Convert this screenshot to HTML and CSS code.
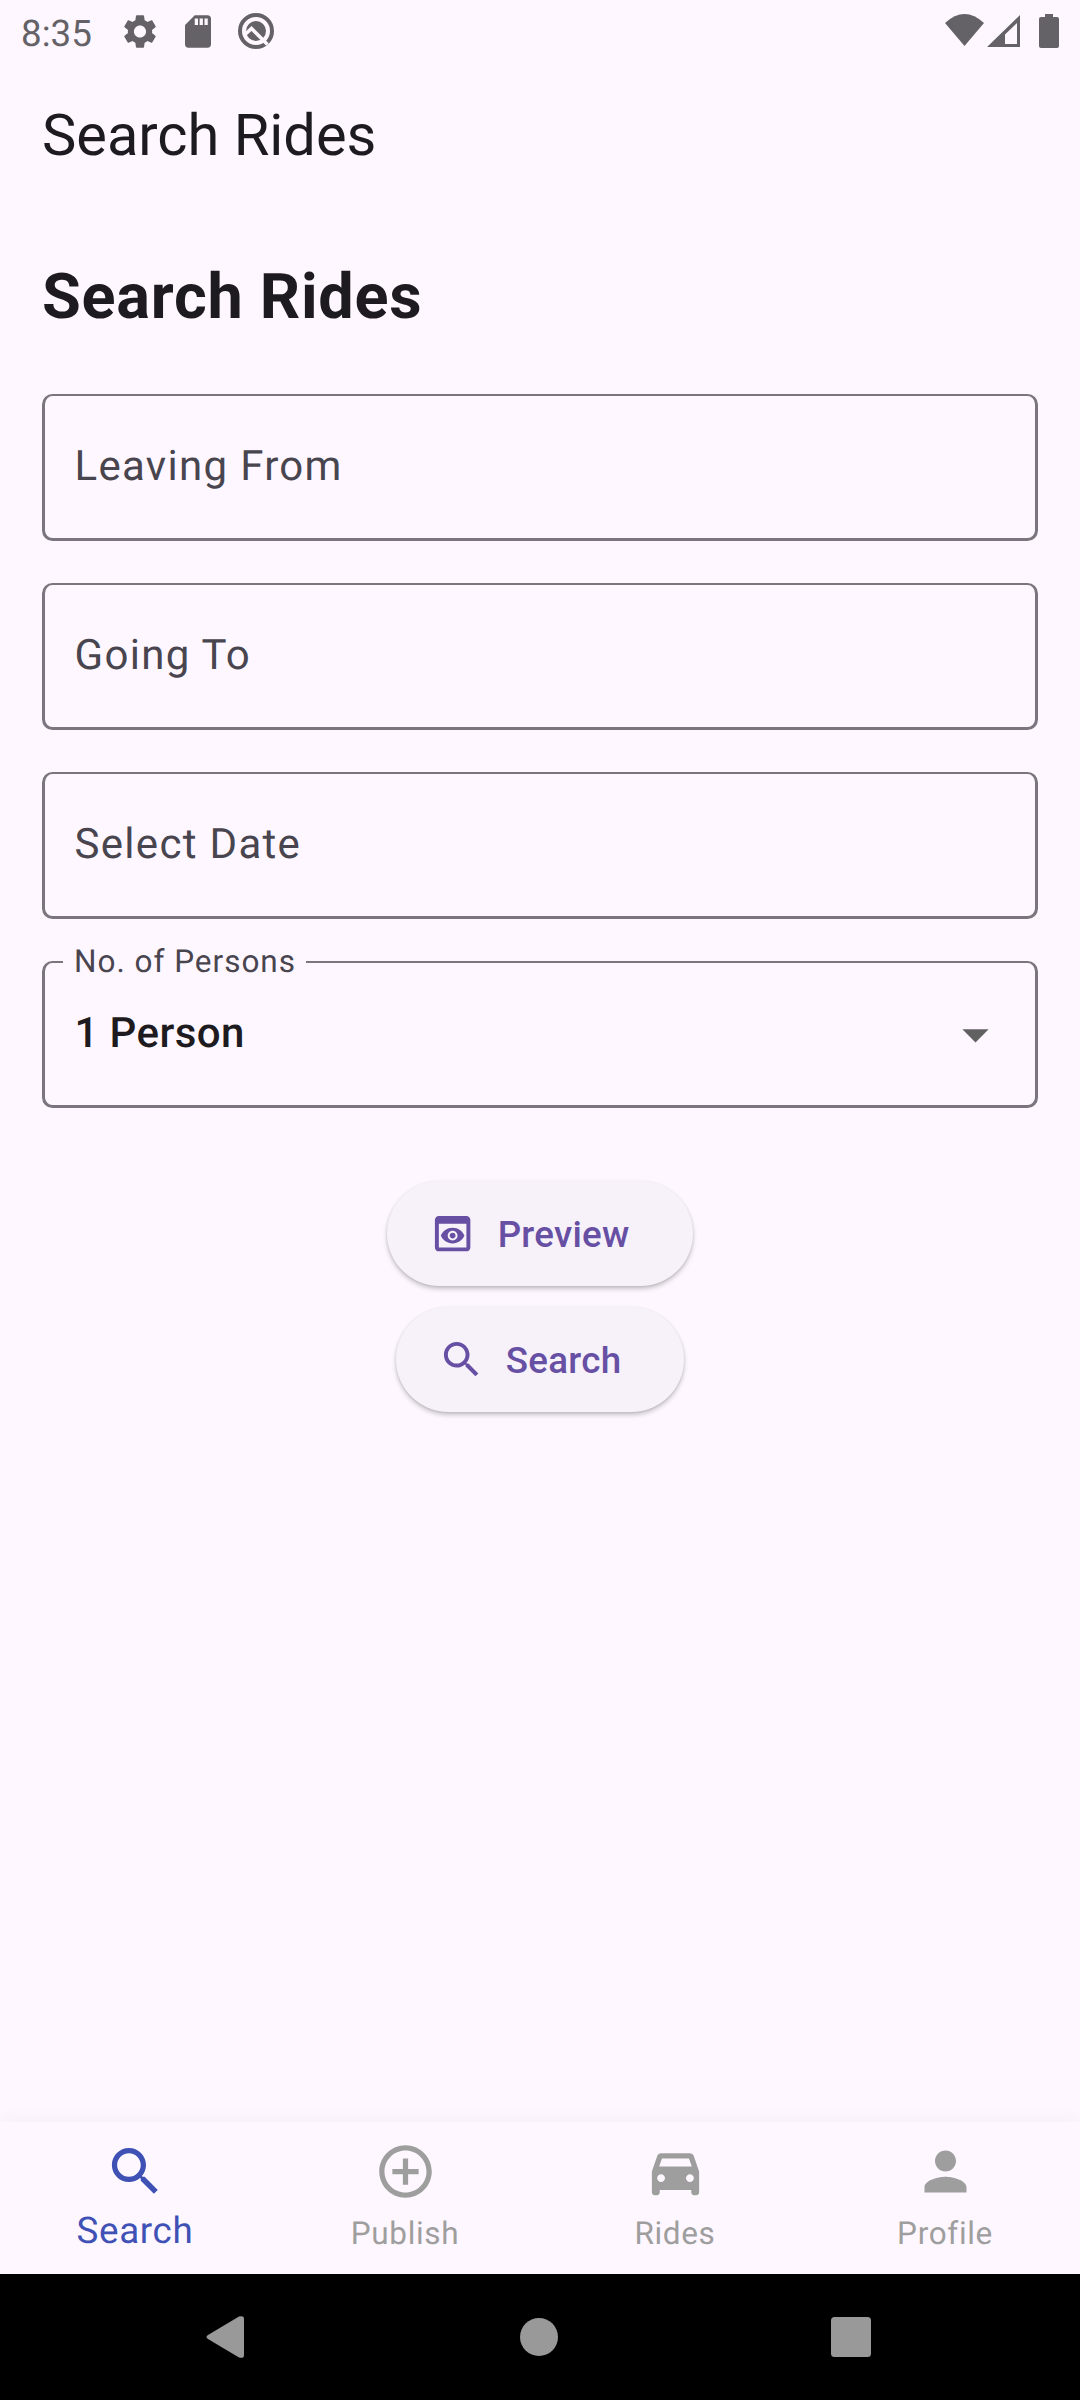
FILE: index.html
```html
<!DOCTYPE html>
<html lang="en">
<head>
<meta charset="utf-8">
<title>Search Rides</title>
<link rel="stylesheet" href="styles.css">
</head>
<body>
<div class="screen">
  <div class="status-bar">
    <span class="clock">8:35</span>
    <svg class="gear" viewBox="2.5 2.4 19 19.2"><path d="M19.14 12.94c.04-.3.06-.61.06-.94 0-.32-.02-.64-.07-.94l2.03-1.58c.18-.14.23-.41.12-.61l-1.92-3.32c-.12-.22-.37-.29-.59-.22l-2.39.96c-.5-.38-1.03-.7-1.62-.94l-.36-2.54c-.04-.24-.24-.41-.48-.41h-3.84c-.24 0-.43.17-.47.41l-.36 2.54c-.59.24-1.13.57-1.62.94l-2.39-.96c-.22-.08-.47 0-.59.22L2.74 8.87c-.12.21-.08.47.12.61l2.03 1.58c-.05.3-.09.63-.09.94s.02.64.07.94l-2.03 1.58c-.18.14-.23.41-.12.61l1.92 3.32c.12.22.37.29.59.22l2.39-.96c.5.38 1.03.7 1.62.94l.36 2.54c.05.24.24.41.48.41h3.84c.24 0 .44-.17.47-.41l.36-2.54c.59-.24 1.13-.56 1.62-.94l2.39.96c.22.08.47 0 .59-.22l1.92-3.32c.12-.22.07-.47-.12-.61l-2.01-1.58zM12 15.6c-1.98 0-3.6-1.62-3.6-3.6s1.62-3.6 3.6-3.6 3.6 1.62 3.6 3.6-1.62 3.6-3.6 3.6z"/></svg>
    <svg class="sd" viewBox="4 2 16 20"><path d="M18 2h-8L4.02 8 4 20c0 1.1.9 2 2 2h12c1.1 0 2-.9 2-2V4c0-1.1-.9-2-2-2zm-6 6h-2V4h2v4zm3 0h-2V4h2v4zm3 0h-2V4h2v4z"/></svg>
    <svg class="badge" viewBox="0 0 36 36"><circle cx="18" cy="18" r="16" fill="none" stroke="#656267" stroke-width="4"/><circle cx="18" cy="18" r="10"/><path d="M7 21.500L13.500 15.500L29.500 31.500" fill="none" stroke="#fef7ff" stroke-width="3.600"/></svg>
    <span class="spacer"></span>
    <svg class="wifi" viewBox="0 0 39 32"><path d="M0 9Q19.500-9 39 9L19.500 32z"/></svg>
    <svg class="signal" viewBox="0 0 33 32"><path fill-rule="evenodd" d="M33 0V32H0zM30 8L18 19.500V29H30z"/></svg>
    <svg class="battery" viewBox="0 0 20 34"><path d="M6 0h8v3h4a2 2 0 0 1 2 2v27a2 2 0 0 1-2 2H2a2 2 0 0 1-2-2V5a2 2 0 0 1 2-2h4z"/></svg>
  </div>
  <header class="app-bar">Search Rides</header>
  <main class="content">
    <h1 class="heading">Search Rides</h1>
    <div class="fields">
      <div class="field"><span class="label">Leaving From</span></div>
      <div class="field"><span class="label">Going To</span></div>
      <div class="field"><span class="label">Select Date</span></div>
      <div class="field">
        <span class="floating">No. of Persons</span>
        <span class="value">1 Person</span>
        <svg class="arrow" viewBox="0 0 24 24"><path d="M7 10l5 5 5-5z"/></svg>
      </div>
    </div>
    <div class="actions">
      <button class="btn"><svg viewBox="0 0 24 24"><path d="M19 3H5c-1.110 0-2 .9-2 2v14c0 1.100.890 2 2 2h14c1.100 0 2-.9 2-2V5c0-1.100-.890-2-2-2zm0 16H5V7h14v12zm-5.500-6c0 .830-.670 1.500-1.500 1.500s-1.500-.670-1.500-1.500.670-1.500 1.500-1.500 1.500.670 1.500 1.500zM12 9c-2.730 0-5.060 1.660-6 4 .940 2.340 3.270 4 6 4s5.060-1.660 6-4c-.940-2.340-3.270-4-6-4zm0 6.500c-1.380 0-2.500-1.120-2.500-2.500s1.120-2.500 2.500-2.500 2.500 1.120 2.500 2.500-1.120 2.500-2.500 2.500z"/></svg><span>Preview</span></button>
      <button class="btn"><svg viewBox="0 0 24 24"><path d="M15.500 14h-.790l-.280-.270C15.410 12.590 16 11.110 16 9.500 16 5.910 13.090 3 9.500 3S3 5.910 3 9.500 5.910 16 9.500 16c1.610 0 3.090-.590 4.230-1.570l.270.280v.790l5 4.990L20.490 19l-4.990-5zm-6 0C7.010 14 5 11.990 5 9.500S7.010 5 9.500 5 14 7.010 14 9.500 11.990 14 9.500 14z"/></svg><span>Search</span></button>
    </div>
  </main>
  <nav class="tabs">
    <div class="tab selected"><svg viewBox="0 0 24 24"><path d="M15.500 14h-.790l-.280-.270C15.410 12.590 16 11.110 16 9.500 16 5.910 13.090 3 9.500 3S3 5.910 3 9.500 5.910 16 9.500 16c1.610 0 3.090-.590 4.230-1.570l.270.280v.790l5 4.990L20.490 19l-4.990-5zm-6 0C7.010 14 5 11.990 5 9.500S7.010 5 9.500 5 14 7.010 14 9.500 11.990 14 9.500 14z"/></svg><span>Search</span></div>
    <div class="tab"><svg viewBox="0 0 24 24"><path d="M13 7h-2v4H7v2h4v4h2v-4h4v-2h-4V7zm-1-5C6.480 2 2 6.480 2 12s4.480 10 10 10 10-4.480 10-10S17.520 2 12 2zm0 18c-4.410 0-8-3.590-8-8s3.590-8 8-8 8 3.590 8 8-3.590 8-8 8z"/></svg><span>Publish</span></div>
    <div class="tab"><svg viewBox="0 0 24 24"><path d="M18.920 6.010C18.720 5.420 18.160 5 17.500 5h-11c-.660 0-1.210.420-1.420 1.010L3 12v8c0 .550.450 1 1 1h1c.550 0 1-.450 1-1v-1h12v1c0 .550.450 1 1 1h1c.550 0 1-.450 1-1v-8l-2.080-5.990zM6.850 7h10.290l1.080 3.110H5.770L6.850 7zM6.500 16c-.830 0-1.500-.670-1.500-1.500S5.670 13 6.500 13s1.500.670 1.500 1.500S7.330 16 6.500 16zm11 0c-.830 0-1.500-.670-1.500-1.500s.670-1.500 1.500-1.500 1.500.670 1.500 1.500-.670 1.500-1.500 1.500z"/></svg><span>Rides</span></div>
    <div class="tab"><svg viewBox="0 0 24 24"><path d="M12 12c2.210 0 4-1.790 4-4s-1.790-4-4-4-4 1.790-4 4 1.790 4 4 4zm0 2c-2.670 0-8 1.340-8 4v2h16v-2c0-2.660-5.330-4-8-4z"/></svg><span>Profile</span></div>
  </nav>
  <div class="system-nav">
    <svg class="back" viewBox="0 0 38 42"><path d="M2 19L33 .6Q38-1 38 3V39Q38 43 33 41.400L2 23Q-1 21 2 19z"/></svg>
    <svg class="home" viewBox="0 0 38 38"><circle cx="19" cy="19" r="19"/></svg>
    <svg class="recent" viewBox="0 0 40 40"><rect width="40" height="40" rx="3.500"/></svg>
  </div>
</div>
</body>
</html>
```
FILE: styles.css
```css
* { box-sizing: border-box; }
body { margin: 0; background: #fef7ff; font-family: Roboto, sans-serif; color: #1d1b20; text-rendering: geometricPrecision; }
svg { display: block; flex: none; fill: currentColor; }
.screen { width: 1080px; height: 2400px; display: flex; flex-direction: column; }

.status-bar { height: 63px; padding: 0 21px; display: flex; color: #656267; }
.spacer { flex: 1; }
.clock { width: 103px; font-size: 36.75px; line-height: 67px; }
.gear { width: 32px; height: 33px; margin-top: 15px; }
.sd { width: 26px; height: 33px; margin: 15px 0 0 29px; }
.badge { width: 36px; height: 36px; margin: 13px 0 0 27px; }
.wifi { width: 39px; height: 32px; margin-top: 14px; }
.signal { width: 33px; height: 32px; margin: 15px 19px 0 3px; }
.battery { width: 20px; height: 34px; margin-top: 14px; }

.app-bar { height: 147px; padding-left: 42px; font-size: 57.75px; line-height: 147px; }
.content { flex: 1; padding: 43px 42px 0; }
.heading { margin: 0 0 51px; font-size: 63px; line-height: 90px; font-weight: 700; letter-spacing: 0.72px; }

.fields { display: flex; flex-direction: column; gap: 42px; }
.field { position: relative; height: 147px; padding: 0 28.5px 0 29.5px; border: 3px solid #7a757f; border-top-width: 2px; border-radius: 10.5px; display: flex; align-items: center; justify-content: space-between; font-size: 42px; }
.label { color: #49454f; letter-spacing: 1.3125px; line-height: 48px; padding-bottom: 1px; }
.floating { position: absolute; left: 18px; top: -20px; width: 243px; padding-left: 11px; background: #fef7ff; color: #49454f; font-size: 31.5px; line-height: 38px; letter-spacing: 0.984px; white-space: nowrap; }
.value { font-weight: 500; letter-spacing: 0.394px; line-height: 48px; padding-bottom: 1px; }
.arrow { width: 63px; height: 63px; color: #616161; }

.actions { display: flex; flex-direction: column; align-items: center; gap: 21px; padding-top: 73px; }
.btn { height: 105px; border: 0; border-radius: 53px; padding: 0 63px 0 42px; display: flex; align-items: center; gap: 21px; background: #f7f2fa; color: #6750a4; font: 500 36.75px/44px Roboto, sans-serif; letter-spacing: 0.2625px; box-shadow: 0 3px 5px rgba(0,0,0,.2), 0 1px 3px rgba(0,0,0,.1); }
.btn svg { width: 47.25px; height: 47.25px; }
.btn span { padding-top: 3px; }

.tabs { height: 152px; display: flex; box-shadow: 0 -4px 14px rgba(0,0,0,.03); }
.tab { flex: 1; display: flex; flex-direction: column; align-items: center; padding-top: 18px; color: #9e9e9e; font-size: 31.5px; letter-spacing: 0.656px; }
.tab svg { width: 63px; height: 63px; }
.tab span { line-height: 44px; padding-top: 9px; }
.tab.selected { color: #3f51b5; font-size: 36.75px; }
.tab.selected span { padding-top: 6px; }

.system-nav { height: 126px; background: #000; color: #999; display: flex; align-items: center; padding: 0 209px 0 206px; justify-content: space-between; }
.back { width: 38px; height: 42px; }
.home { width: 38px; height: 38px; margin-left: 3px; }
.recent { width: 40px; height: 40px; }
```
